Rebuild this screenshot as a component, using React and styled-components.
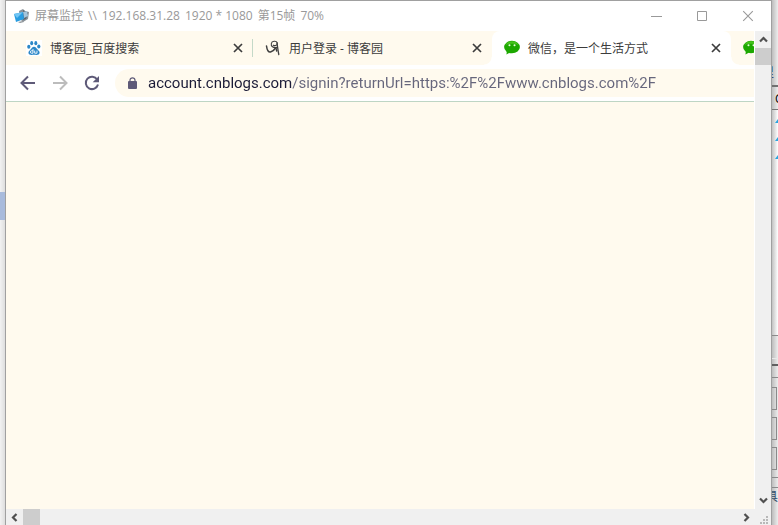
import React from "react";
import styled, { createGlobalStyle, css } from "styled-components";

const GlobalStyle = createGlobalStyle`
* { box-sizing: border-box; }
body {
    margin: 0;
    overflow: hidden;
    font-family: "Open Sans", "Noto Sans CJK SC", sans-serif;
    font-size: 12px;
    background: #ffffff;
}
button, input { font: inherit; }
`;

const Desktop = styled.div`
display: grid;
grid-template-columns: 5px minmax(0, 1fr) 6px;
height: 100vh;
`;
const LeftEdge = styled.div`
padding-top: 192px;
background: linear-gradient(to right, #f2f2f2, #dedede);
`;
const Selection = styled.div`
height: 28px;
background: #a9bbdc;
`;

const Window = styled.main`
display: flex;
flex-direction: column;
min-width: 0;
border: 1px solid #a0a0a0;
border-bottom: none;
background: #ffffff;
`;
const TitleBar = styled.header`
display: flex;
align-items: center;
flex: none;
height: 30px;
padding-left: 8px;
color: #999999;
`;
const Title = styled.h1`
display: flex;
flex: 1;
gap: 5px;
margin: 0 0 0 5px;
font-size: 12px;
font-weight: 400;
line-height: 16px;
white-space: nowrap;
`;
const PlainButton = styled.button`
display: flex;
align-items: center;
justify-content: center;
flex: none;
padding: 0;
border: none;
background: none;
color: inherit;
`;
const WindowButton = styled(PlainButton)`
width: 46px;
height: 28px;
`;

const Body = styled.div`
display: grid;
grid-template-columns: minmax(0, 1fr) 16px;
grid-template-rows: minmax(0, 1fr) 16px;
flex: 1;
min-height: 0;
background: #f0f0f0;
`;
const Screen = styled.section`
display: flex;
flex-direction: column;
min-width: 0;
overflow: hidden;
border-right: 1px solid #ffffff;
background: #fffaee;
`;

const TabStrip = styled.div`
display: flex;
flex: none;
height: 34px;
padding-left: 8px;
background: #fffaee;
`;
const Tab = styled.div`
display: flex;
align-items: center;
flex: none;
gap: 8px;
width: 239px;
padding: 0 10px 0 12px;
color: #3c3c3c;
${props => props.$active ? css`
    background: #ffffff;
    border-radius: 8px 8px 0 0;
` : ""};
${props => props.$divided ? css`
    background: linear-gradient(#c4d9c8, #c4d9c8) right center / 1px 18px no-repeat;
` : ""};
`;
const TabCurve = styled.div`
flex: none;
align-self: flex-end;
width: 8px;
height: 8px;
background: radial-gradient(circle at ${props => props.$side} top, #fffaee 7px, #ffffff 8px);
margin-${props => props.$side}: -8px;
`;
const TabTitle = styled.span`
flex: 1;
padding-top: 2px;
line-height: 16px;
white-space: nowrap;
`;

const Toolbar = styled.div`
display: flex;
align-items: center;
flex: none;
height: 37px;
padding-left: 13px;
border-bottom: 1px solid #bed5c4;
background: #ffffff;
color: #5e5a78;
`;
const NavButton = styled(PlainButton)`
width: 18px;
height: 18px;
margin-right: 14px;
color: ${props => props.disabled ? "#bcbcbc" : "#5e5a78"};
`;
const AddressBar = styled.label`
display: flex;
align-items: center;
flex: 1;
gap: 11px;
height: 28px;
padding-left: 13px;
border-radius: 14px 0 0 14px;
background: #fffaee;
`;
const Address = styled.input`
flex: 1;
min-width: 0;
height: 22px;
padding: 0;
border: none;
outline: none;
font-family: Roboto, "Noto Sans CJK SC", sans-serif;
font-size: 15px;
color: transparent;
background: linear-gradient(to right, #1c1c38 144px, #66667c 144px);
background-clip: text;
-webkit-background-clip: text;
`;

const ScrollTrack = styled.div`
display: flex;
flex-direction: ${props => props.$vertical ? "column" : "row"};
background: #f0f0f0;
`;
const ScrollButton = styled(PlainButton)`
width: ${props => props.$vertical ? "auto" : "17px"};
height: ${props => props.$vertical ? "17px" : "auto"};
color: #505050;
${props => props.$end ? css`margin-${props.$end}: auto;` : ""};
`;
const ScrollThumb = styled.div`
flex: none;
width: ${props => props.$vertical ? "auto" : "17px"};
height: ${props => props.$vertical ? "17px" : "auto"};
background: #cdcdcd;
`;
const Corner = styled.div`
display: flex;
align-items: flex-end;
justify-content: flex-end;
padding: 0 3px 1px 0;
`;

const RightEdge = styled.div`
display: flex;
flex-direction: column;
overflow: hidden;
background: linear-gradient(to right, #bdbdbd, #ededed);
`;
const Strip = styled.div`
flex: none;
height: ${props => props.$height}px;
padding-left: ${props => props.$indent || 0}px;
border-bottom: ${props => props.$line ? `${props.$weight || 1}px solid ${props.$line}` : "none"};
background: ${props => props.$light ? "linear-gradient(to right, #c2c2c2, #ffffff)" : "none"};
color: ${props => props.$color || "#000000"};
line-height: ${props => props.$height}px;
white-space: nowrap;
overflow: hidden;
`;
const Clipped = styled.span`
display: flex;
justify-content: flex-end;
width: ${props => props.$width}px;
`;
const Marks = styled(Strip)`
display: flex;
flex-direction: column;
gap: 10px;
padding-top: 8px;
`;
const Box = styled.div`
flex: none;
height: 23px;
margin: 0 1px 7px 0;
border: 1px solid #8a8a8a;
border-left: none;
`;

const Cross = ({ size, stroke }) => (
    <svg width={size} height={size} viewBox="0 0 10 10" fill="none" stroke="currentColor" strokeWidth={stroke}>
        <path d="M1 1l8 8M9 1L1 9" />
    </svg>
);

const AppIcon = () => (
    <svg width="16" height="16" viewBox="0 0 16 16">
        <path d="M5 3l4-2 2 2 4 1-1 7-5 3-3-3z" fill="#8a9299" />
        <path d="M9 2l2 1 3 2-2 6-3 1z" fill="#5c666f" />
        <path d="M9 4l4-1 1 5-4 2z" fill="#a4c4da" />
        <path d="M0 6l9-2 1 7-8 3z" fill="#299ce0" />
        <path d="M0 6l9-2-6 6z" fill="#71c5f4" />
        <path d="M4 14l5-1 1 1-4 1z" fill="#8e9499" />
    </svg>
);

const PawIcon = () => (
    <svg width="16" height="16" viewBox="0 0 16 16">
        <rect width="16" height="16" fill="#ffffff" />
        <g fill="#2b87c8">
            <ellipse cx="2.8" cy="6.8" rx="1.6" ry="2" />
            <ellipse cx="5.7" cy="3.2" rx="1.5" ry="2.1" />
            <ellipse cx="9.8" cy="3.2" rx="1.5" ry="2.1" />
            <ellipse cx="12.8" cy="6.6" rx="1.6" ry="2" />
            <path d="M8 6.7c1.7 0 2.5 1.7 3.8 3 1.4 1.3 2.1 2.2 1.7 3.6-.4 1.7-2 1.8-5.5 1.5-3.4.4-5.1.1-5.5-1.5-.3-1.4.4-2.3 1.8-3.6 1.3-1.3 2-3 3.7-3z" />
        </g>
        <path d="M7 9v4.2H5.4c-1.4 0-1.5-2.4 0-2.4H7M8.7 10.6v2.6h2.3v-2.6" fill="none" stroke="#ffffff" strokeWidth=".9" />
    </svg>
);

const ScribbleIcon = () => (
    <svg width="16" height="16" viewBox="0 0 16 16" fill="none" stroke="#3f3f3f" strokeLinecap="round">
        <path d="M1.5 6C2 10 3.500 12.600 5.500 12c1.800-.5 4-2.200 5.500-4.500" strokeWidth="1.500" />
        <path d="M11.800 7.500C8 8.300 5.800 6 6.300 3.600c.5-2.600 5-3.200 5.900-.8.8 2.600-2.300 3.400-3.900 2.400" strokeWidth="1.100" />
        <path d="M12 3c.6 4 1 8 1.800 11.500M11 8l.6 3" strokeWidth="1.300" />
    </svg>
);

const ChatIcon = () => (
    <svg width="16" height="16" viewBox="0 0 17 16">
        <ellipse cx="8.500" cy="7" rx="8.400" ry="6.600" fill="#1da800" />
        <path d="M3 11.500L2.600 15 6.500 12.800z" fill="#1da800" />
        <path d="M1.500 5C3 1.500 6 .8 8.500 .8s5.500.7 7 4.200C12 3 5 3 1.500 5z" fill="#45c21c" />
        <circle cx="5.800" cy="5" r="1.100" fill="#e6ffd8" />
        <circle cx="11.200" cy="5" r="1.100" fill="#e6ffd8" />
    </svg>
);

const Arrow = ({ flip }) => (
    <svg width="16" height="16" viewBox="0 0 16 16" fill="none" stroke="currentColor" strokeWidth="2">
        <path d={flip ? "M1 8h13M8 1.500L14.500 8 8 14.500" : "M15 8H2M8 1.500L1.500 8 8 14.500"} />
    </svg>
);

const ReloadIcon = () => (
    <svg width="16" height="16" viewBox="0 0 16 16">
        <path d="M13.200 4.500A6.200 6.200 0 1 0 14 9.500" fill="none" stroke="currentColor" strokeWidth="2" />
        <path d="M15 1v6.300H8.700z" fill="currentColor" />
    </svg>
);

const LockIcon = () => (
    <svg width="9" height="12" viewBox="0 0 9 12">
        <path d="M2 5V3.300a2.500 2.500 0 0 1 5 0V5" fill="none" stroke="#5e5a78" strokeWidth="1.200" />
        <rect y="4" width="9" height="8" rx="1" fill="#5e5a78" />
    </svg>
);

const turns = { up: 0, right: 90, down: 180, left: 270 };

const Chevron = ({ to }) => (
    <svg width="9" height="9" viewBox="0 0 9 9" fill="none" stroke="currentColor" strokeWidth="2.200">
        <path d="M1 6.500L4.500 3 8 6.500" transform={`rotate(${turns[to]} 4.500 4.500)`} />
    </svg>
);

const GripIcon = () => (
    <svg width="8" height="8" viewBox="0 0 8 8" fill="#b8b8b8">
        <path d="M6 0h2v2H6zM3 3h2v2H3zM6 3h2v2H6zM0 6h2v2H0zM3 6h2v2H3zM6 6h2v2H6z" />
    </svg>
);

const MarkIcon = () => (
    <svg width="6" height="8" viewBox="0 0 6 8">
        <path d="M3 5l3-4v4z" fill="#29a5df" />
    </svg>
);

const BrowserTab = ({ icon, title, active, divided }) => (
    <Tab $active={ active } $divided={ divided }>
        { icon }
        <TabTitle>{ title }</TabTitle>
        <PlainButton aria-label="关闭标签页"><Cross size={10} stroke={1.7} /></PlainButton>
    </Tab>
);

const App = () => {
    return (
        <>
            <GlobalStyle />
            <Desktop>
                <LeftEdge><Selection /></LeftEdge>
                <Window>
                    <TitleBar>
                        <AppIcon />
                        <Title>
                            <span>屏幕监控</span>
                            <span>\\</span>
                            <span>192.168.31.28</span>
                            <span>1920 * 1080</span>
                            <span>第15帧</span>
                            <span>70%</span>
                        </Title>
                        <WindowButton aria-label="最小化">
                            <svg width="11" height="11" viewBox="0 0 11 11"><path d="M0 5.500h11" stroke="currentColor" /></svg>
                        </WindowButton>
                        <WindowButton aria-label="最大化">
                            <svg width="10" height="10" viewBox="0 0 10 10"><path d="M.5 .5h9v9h-9z" fill="none" stroke="currentColor" /></svg>
                        </WindowButton>
                        <WindowButton aria-label="关闭"><Cross size={12} stroke={0.9} /></WindowButton>
                    </TitleBar>
                    <Body>
                        <Screen>
                            <TabStrip>
                                <BrowserTab icon={ <PawIcon /> } title="博客园_百度搜索" divided />
                                <BrowserTab icon={ <ScribbleIcon /> } title="用户登录 - 博客园" />
                                <TabCurve $side="left" />
                                <BrowserTab icon={ <ChatIcon /> } title="微信，是一个生活方式" active />
                                <TabCurve $side="right" />
                                <BrowserTab icon={ <ChatIcon /> } />
                            </TabStrip>
                            <Toolbar>
                                <NavButton aria-label="后退"><Arrow /></NavButton>
                                <NavButton aria-label="前进" disabled><Arrow flip /></NavButton>
                                <NavButton aria-label="重新加载"><ReloadIcon /></NavButton>
                                <AddressBar>
                                    <LockIcon />
                                    <Address
                                    aria-label="地址"
                                    defaultValue="account.cnblogs.com/signin?returnUrl=https:%2F%2Fwww.cnblogs.com%2F"
                                    />
                                </AddressBar>
                            </Toolbar>
                        </Screen>
                        <ScrollTrack $vertical>
                            <ScrollButton aria-label="向上滚动" $vertical><Chevron to="up" /></ScrollButton>
                            <ScrollThumb $vertical />
                            <ScrollButton aria-label="向下滚动" $vertical $end="top"><Chevron to="down" /></ScrollButton>
                        </ScrollTrack>
                        <ScrollTrack>
                            <ScrollButton aria-label="向左滚动"><Chevron to="left" /></ScrollButton>
                            <ScrollThumb />
                            <ScrollButton aria-label="向右滚动" $end="left"><Chevron to="right" /></ScrollButton>
                        </ScrollTrack>
                        <Corner><GripIcon /></Corner>
                    </Body>
                </Window>
                <RightEdge>
                    <Strip $height={64} />
                    <Strip $height={17} $color="#0c2860"><Clipped $width={2}>里</Clipped></Strip>
                    <Strip $height={6} $line="#707070" $weight={2} />
                    <Strip $height={23} $indent={3} $line="#777777">C</Strip>
                    <Marks $height={226} $light $line="#8a8a8a">
                        <MarkIcon />
                        <MarkIcon />
                        <MarkIcon />
                    </Marks>
                    <Strip $height={23} $line="#e8e8e8" />
                    <Strip $height={7} $line="#606060" $weight={2} />
                    <Strip $height={12} $line="#8a8a8a" />
                    <Strip $height={9} />
                    <Box />
                    <Box />
                    <Box />
                    <Strip $height={0} $line="#8a8a8a" />
                    <Strip $height={10} $line="#8a8a8a" />
                    <Strip $height={17} $color="#33506c"><Clipped $width={6}>具</Clipped></Strip>
                    <Strip $height={20} />
                </RightEdge>
            </Desktop>
        </>
    );
};

export default App;
